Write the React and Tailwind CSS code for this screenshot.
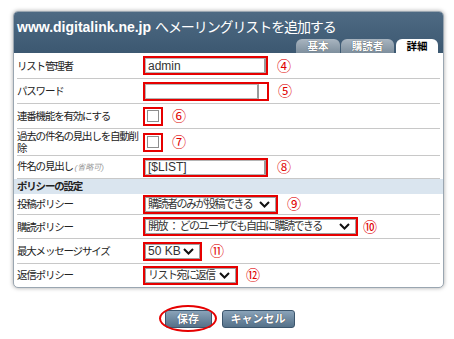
import React from 'react';

const FONT = "font-['Liberation_Sans','Noto_Sans_CJK_JP',sans-serif]";

function Num({ children, cls = 'ml-[9px]' }) {
  return (
    <span className={`text-[#e00000] text-[14px] leading-none ${cls}`}>{children}</span>
  );
}

function Chevron() {
  return (
    <svg width="11" height="7" viewBox="0 0 11 7" className="shrink-0">
      <path d="M1 1 L5.5 5.5 L10 1" fill="none" stroke="#111" strokeWidth="2" />
    </svg>
  );
}

function Row({ h, label, children, last }) {
  return (
    <div className={`flex items-center mx-[3px] ${last ? '' : 'border-b border-[#c8c8c8]'} ${h}`}>
      <div className="w-[126px] shrink-0 text-[10.5px] tracking-[-1.2px] leading-[12px] text-[#222] whitespace-nowrap">{label}</div>
      <div className="flex items-center">{children}</div>
    </div>
  );
}

function TextBox({ value, w, inner }) {
  return (
    <div className={`border-2 border-[#e60000] h-[19px] flex ${w}`}>
      <div className={`h-full border border-[#b4b4b4] border-r-2 border-r-[#9a9a9a] bg-white flex items-center px-[2px] text-[12px] text-[#333] ${inner}`}>
        {value}
      </div>
    </div>
  );
}

function Select({ value, w, latin }) {
  return (
    <div className={`border-2 border-[#e60000] h-[19px] ${w}`}>
      <div className="h-full border border-[#a0a0a0] bg-white flex items-center justify-between pl-[2px] pr-[5px] text-[#333] whitespace-nowrap">
        <span className={latin ? 'leading-none text-[12px]' : 'leading-none text-[11px] tracking-[-1.5px]'}>{value}</span>
        <Chevron />
      </div>
    </div>
  );
}

function Check() {
  return (
    <div className="border-2 border-[#e60000] w-[20px] h-[19px] flex items-center justify-center">
      <div className="w-[12px] h-[12px] border border-[#8e8e8e] bg-white" />
    </div>
  );
}

export default function App() {
  return (
    <div className={`w-[454px] h-[339px] bg-white pt-[11px] pl-[13px] ${FONT}`}>
      <div className="w-[431px] rounded-[5px] border border-[#9aa6b1] shadow-[0_0_4px_rgba(0,0,0,0.35)] overflow-hidden bg-white">
        {/* header */}
        <div className="h-[41px] bg-gradient-to-b from-[#4e6a83] to-[#3c5871] relative">
          <div className="pt-[6px] pl-[3px] text-white leading-[18px] whitespace-nowrap">
            <span className="font-bold text-[14px]">www.digitalink.ne.jp</span>
            <span className="ml-[4px] text-[14px] tracking-[-1.1px]">へメーリングリストを追加する</span>
          </div>
          <div className="absolute bottom-0 right-[5px] flex items-end gap-[1px]">
            <div className="w-[44px] h-[14px] rounded-t-[6px] bg-gradient-to-b from-[#a9b5c0] to-[#7e8f9d] text-white text-[10.5px] font-bold flex items-center justify-center leading-none [text-shadow:0_0_1px_#333]">基本</div>
            <div className="w-[53px] h-[14px] rounded-t-[6px] bg-gradient-to-b from-[#a9b5c0] to-[#7e8f9d] text-white text-[10.5px] font-bold flex items-center justify-center leading-none [text-shadow:0_0_1px_#333]">購読者</div>
            <div className="ml-[1px] w-[42px] h-[14px] rounded-t-[6px] bg-white text-black text-[10.5px] font-bold flex items-center justify-center leading-none">詳細</div>
          </div>
        </div>
        {/* body */}
        <div className="pb-[1px]">
          <Row h="h-[26px]" label="リスト管理者">
            <TextBox value="admin" w="w-[125px]" inner="w-full" />
            <Num>④</Num>
          </Row>
          <Row h="h-[25px]" label="パスワード">
            <TextBox value="" w="w-[126px]" inner="w-[114px]" />
            <Num>⑤</Num>
          </Row>
          <Row h="h-[25px]" label="連番機能を有効にする">
            <Check />
            <Num>⑥</Num>
          </Row>
          <Row h="h-[27px]" label={<>過去の件名の見出しを自動削<br />除</>}>
            <Check />
            <Num>⑦</Num>
          </Row>
          <Row h="h-[23px]" label={<>件名の見出し <span className="text-[8px] italic text-[#999] tracking-normal">(省略可)</span></>}>
            <TextBox value="[$LIST]" w="w-[125px]" inner="w-full" />
            <Num>⑧</Num>
          </Row>
          <div className="h-[15px] bg-[#dae5ef] pl-[3px] flex items-center text-[10.5px] tracking-[-1.2px] font-bold text-[#222]">ポリシーの設定</div>
          <Row h="h-[21px]" label="投稿ポリシー">
            <Select value="購読者のみが投稿できる" w="w-[135px]" />
            <Num>⑨</Num>
          </Row>
          <Row h="h-[24px]" label="購読ポリシー">
            <Select value="開放 ： どのユーザでも自由に購読できる" w="w-[215px]" />
            <Num cls="ml-[5px]">⑩</Num>
          </Row>
          <Row h="h-[25px]" label="最大メッセージサイズ">
            <Select value="50 KB" w="w-[59px]" latin />
            <Num cls="ml-[8px]">⑪</Num>
          </Row>
          <Row h="h-[22px]" label="返信ポリシー" last>
            <Select value="リスト宛に返信" w="w-[95px]" />
            <Num cls="ml-[8px]">⑫</Num>
          </Row>
        </div>
      </div>
      {/* buttons */}
      <div className="w-[431px] flex justify-center gap-[10px] mt-[22px] pl-[2px]">
        <div className="relative">
          <div className="w-[47px] h-[18px] rounded-[3px] border border-[#3b556c] bg-gradient-to-b from-[#8aa3b9] to-[#557189] text-white text-[11px] font-bold flex items-center justify-center leading-none [text-shadow:0_0_1px_#223]">保存</div>
          <div className="absolute left-[-6px] right-[-5px] top-[-5px] bottom-[-4px] rounded-[50%] border-2 border-[#e60000]" />
        </div>
        <div className="w-[73px] h-[18px] rounded-[3px] border border-[#3b556c] bg-gradient-to-b from-[#8aa3b9] to-[#557189] text-white text-[11px] font-bold flex items-center justify-center leading-none [text-shadow:0_0_1px_#223]">キャンセル</div>
      </div>
    </div>
  );
}
